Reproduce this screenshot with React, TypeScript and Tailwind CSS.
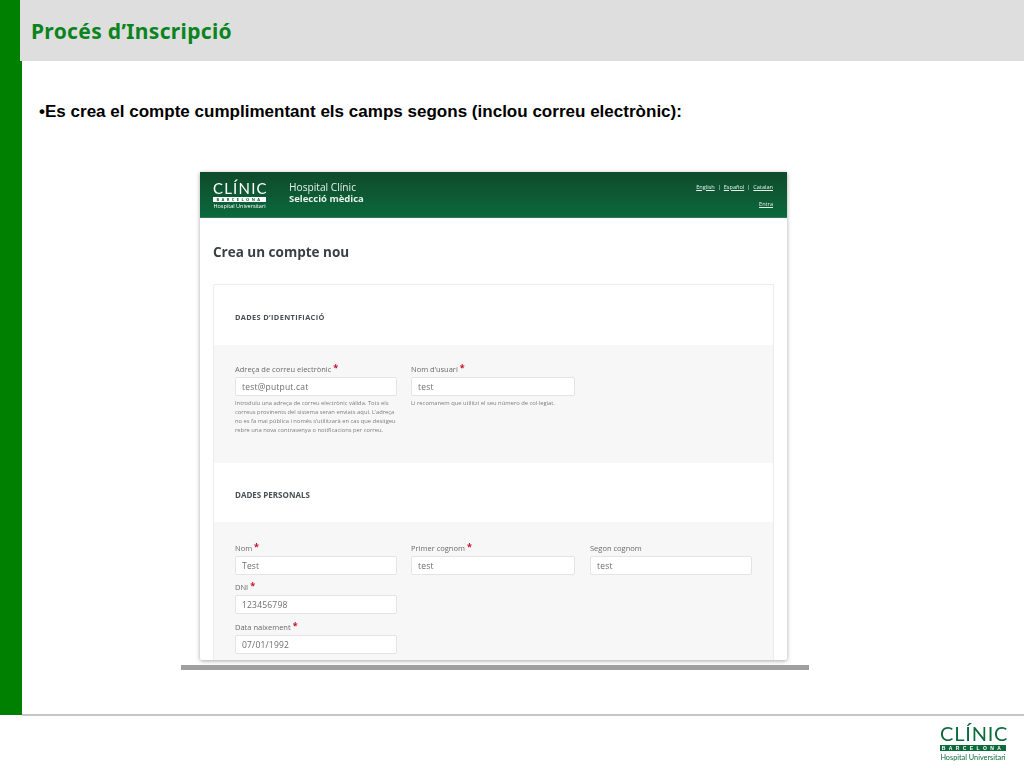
const sans = "font-['Open_Sans','Noto_Sans',sans-serif]";

function Field({ label, req, value, w, help }: { label: string; req?: boolean; value: string; w: string; help?: string[] }) {
  return (
    <div>
      <div className="flex h-[13px] items-start text-[7.5px] leading-[13px] text-[#6b6b6b] whitespace-nowrap">
        {label}
        {req && <span className="ml-[2px] text-[9px] leading-[9px] font-bold text-[#c8102e]">*</span>}
      </div>
      <div className={`${w} mt-[1px] flex h-[19px] items-center rounded-[2px] border border-[#e4e4e4] bg-white pl-[6px] pt-[1px] text-[8.5px] tracking-[0.2px] text-[#6e6e6e]`}>
        {value}
      </div>
      {help && (
        <div className="mt-[3px] text-[5.8px] leading-[9px] text-[#7d7d7d] whitespace-nowrap">
          {help.map((h) => (
            <div key={h}>{h}</div>
          ))}
        </div>
      )}
    </div>
  );
}

function Logo() {
  return (
    <div className="flex w-[66px] flex-col text-[#0b6b3a]">
      <div className="text-center text-[20px] leading-[21px] tracking-[0.8px] whitespace-nowrap font-['Lato',sans-serif]">CLÍNIC</div>
      <div className="mt-[1px] flex h-[6px] items-center justify-center bg-[#0b6b3a] text-[5px] leading-[6px] font-bold tracking-[3.4px] text-white whitespace-nowrap font-['Liberation_Sans',sans-serif]">BARCELONA</div>
      <div className="mt-[1px] text-center text-[7.3px] leading-[11px] whitespace-nowrap font-['Lato',sans-serif]">Hospital Universitari</div>
    </div>
  );
}

export default function App() {
  return (
    <div className="flex h-[768px] w-[1024px] flex-col overflow-hidden bg-white font-['Liberation_Sans',sans-serif]">
      <div className="flex h-[61px] shrink-0">
        <div className="w-[20px] bg-[#008000]" />
        <div className="flex flex-1 items-center bg-[#dedede] pl-[11px] pt-[2px]">
          <h1 className="text-[21px] font-bold tracking-[0.33px] text-[#0a8420] font-['Noto_Sans',sans-serif]">Procés d’Inscripció</h1>
        </div>
      </div>

      <div className="flex h-[654px] shrink-0">
        <div className="w-[22px] bg-[#008000]" />
        <div className="flex flex-1 flex-col items-start">
          <p className="mt-[41px] ml-[17px] text-[17.05px] leading-[20px] font-bold text-black">•Es crea el compte cumplimentant els camps segons (inclou correu electrònic):</p>

          <div className="ml-[159px] mt-[50px] flex flex-col">
            <div className={`${sans} ml-[19px] flex h-[488px] w-[587px] flex-col overflow-hidden rounded-b-[2px] bg-white shadow-[0_1px_4px_rgba(0,0,0,0.35)] blur-[0.3px]`}>
              <div className="flex h-[46px] shrink-0 items-center justify-between border-b border-[#2f7a50] bg-gradient-to-b from-[#0f4a2b] to-[#09693d] pl-[13px] pr-[14px]">
                <div className="flex items-center">
                  <div className="flex w-[53px] flex-col text-white">
                    <div className="text-center text-[15px] leading-[16px] tracking-[1.2px] whitespace-nowrap font-['Lato',sans-serif]">CLÍNIC</div>
                    <div className="mt-[1px] h-[5px] bg-white text-center text-[4px] leading-[5px] font-bold tracking-[2.4px] text-[#0f5a34] whitespace-nowrap">BARCELONA</div>
                    <div className="mt-[1px] text-center text-[5.5px] leading-[7px] whitespace-nowrap">Hospital Universitari</div>
                  </div>
                  <div className="ml-[23px] -mt-[3px] leading-[12px] text-[#e6f0ea]">
                    <div className="text-[10.2px]">Hospital Clínic</div>
                    <div className="text-[9.5px] font-bold">Selecció mèdica</div>
                  </div>
                </div>
                <div className="mt-[1px] flex flex-col items-end gap-[9px] text-[5.6px] leading-[8px] text-[#e6f0ea]">
                  <div className="flex gap-[3px]">
                    <span className="underline">English</span>
                    <span>|</span>
                    <span className="underline">Español</span>
                    <span>|</span>
                    <span className="underline">Catalan</span>
                  </div>
                  <span className="underline">Entra</span>
                </div>
              </div>

              <div className="flex min-h-0 flex-1 flex-col px-[13px]">
                <h2 className="mt-[25px] h-[19px] text-[13.5px] leading-[19px] font-bold text-[#3a3f44]">Crea un compte nou</h2>
                <div className="mt-[22px] flex min-h-0 flex-1 flex-col rounded-t-[2px] border border-b-0 border-[#ececec]">
                  <div className="flex h-[60px] shrink-0 items-center pl-[21px] pt-[5px] text-[7.4px] font-bold tracking-[0.35px] text-[#4a4f54]">DADES D’IDENTIFIACIÓ</div>
                  <div className="flex h-[118px] shrink-0 gap-[14px] bg-[#f7f7f7] pl-[21px] pt-[18px]">
                    <Field
                      label="Adreça de correu electrònic"
                      req
                      value="test@putput.cat"
                      w="w-[162px]"
                      help={[
                        "Introduïu una adreça de correu electrònic vàlida. Tots els",
                        "correus provinents del sistema seran enviats aquí. L’adreça",
                        "no es fa mai pública i només s’utilitzarà en cas que desitgeu",
                        "rebre una nova contrasenya o notificacions per correu.",
                      ]}
                    />
                    <Field
                      label="Nom d’usuari"
                      req
                      value="test"
                      w="w-[164px]"
                      help={["Li recomanem que utilitzi el seu número de col·legiat."]}
                    />
                  </div>
                  <div className="flex h-[59px] shrink-0 items-center pl-[21px] pt-[4px] text-[8px] font-bold text-[#4a4f54]">DADES PERSONALS</div>
                  <div className="flex flex-1 flex-col gap-[6px] bg-[#f7f7f7] pl-[21px] pt-[20px]">
                    <div className="flex gap-[14px]">
                      <Field label="Nom" req value="Test" w="w-[162px]" />
                      <Field label="Primer cognom" req value="test" w="w-[164px]" />
                      <div className="ml-[1px]">
                        <Field label="Segon cognom" value="test" w="w-[162px]" />
                      </div>
                    </div>
                    <Field label="DNI" req value="123456798" w="w-[162px]" />
                    <div className="mt-[1px]">
                      <Field label="Data naixement" req value="07/01/1992" w="w-[162px]" />
                    </div>
                  </div>
                </div>
              </div>
            </div>
            <div className="mt-[5px] h-[5px] w-[628px] bg-[#a0a0a0]" />
          </div>
        </div>
      </div>

      <div className="-mt-[1px] flex flex-1 flex-col">
        <div className="ml-[22px] h-[2px] bg-[#c6c6c6]" />
        <div className="flex justify-end pr-[18px] pt-[7px] blur-[0.3px]">
          <Logo />
        </div>
      </div>
    </div>
  );
}
